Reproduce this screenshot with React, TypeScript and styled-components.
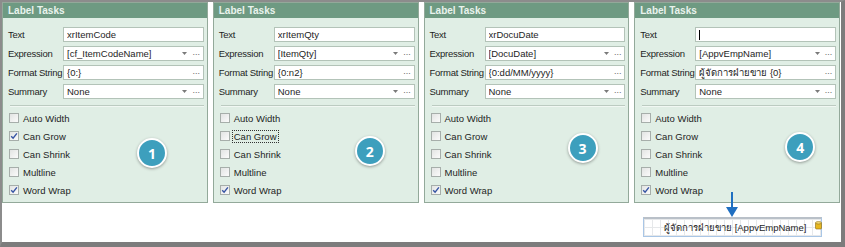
import React from 'react';
import styled, { createGlobalStyle } from 'styled-components';

/* global */
const GlobalStyle = createGlobalStyle`
  html, body {
    margin: 0;
    padding: 0;
    background: #ffffff;
  }
  body {
    font-family: "Liberation Sans", Arial, "Noto Sans", sans-serif;
  }
`;

interface Field {
  label: string;
  value: string;
  dropdown?: boolean;
  caret?: boolean;
}

interface Check {
  label: string;
  checked: boolean;
  focused?: boolean;
}

interface PanelData {
  id: number;
  fields: Field[];
  checks: Check[];
  badge: { x: number; y: number };
}

const checkLabels = ['Auto Width', 'Can Grow', 'Can Shrink', 'Multline', 'Word Wrap'];

const makeChecks = (grow: boolean, focusGrow = false): Check[] =>
  checkLabels.map((label) => ({
    label,
    checked: label === 'Word Wrap' || (label === 'Can Grow' && grow),
    focused: label === 'Can Grow' && focusGrow,
  }));

const panels: PanelData[] = [
  {
    id: 1,
    fields: [
      { label: 'Text', value: 'xrItemCode' },
      { label: 'Expression', value: '[cf_ItemCodeName]', dropdown: true },
      { label: 'Format String', value: '{0:}' },
      { label: 'Summary', value: 'None', dropdown: true },
    ],
    checks: makeChecks(true),
    badge: { x: 149, y: 150 },
  },
  {
    id: 2,
    fields: [
      { label: 'Text', value: 'xrItemQty' },
      { label: 'Expression', value: '[ItemQty]', dropdown: true },
      { label: 'Format String', value: '{0:n2}' },
      { label: 'Summary', value: 'None', dropdown: true },
    ],
    checks: makeChecks(false, true),
    badge: { x: 156, y: 148 },
  },
  {
    id: 3,
    fields: [
      { label: 'Text', value: 'xrDocuDate' },
      { label: 'Expression', value: '[DocuDate]', dropdown: true },
      { label: 'Format String', value: '{0:dd/MM/yyyy}' },
      { label: 'Summary', value: 'None', dropdown: true },
    ],
    checks: makeChecks(false),
    badge: { x: 158, y: 145 },
  },
  {
    id: 4,
    fields: [
      { label: 'Text', value: '', caret: true },
      { label: 'Expression', value: '[AppvEmpName]', dropdown: true },
      { label: 'Format String', value: 'ผู้จัดการฝ่ายขาย {0}' },
      { label: 'Summary', value: 'None', dropdown: true },
    ],
    checks: makeChecks(false),
    badge: { x: 165, y: 144 },
  },
];

/* ===========
App
=========== */
export default function App() {
  return (
    <>
      <GlobalStyle />
      <Frame>
        <PanelRow>
          {panels.map((p) => (
            <Panel key={p.id}>
              <PanelHeader>Label Tasks</PanelHeader>
              <PanelBody>
                {p.fields.map((f) => (
                  <FieldRow key={f.label}>
                    <FieldLabel>{f.label}</FieldLabel>
                    <InputBox>
                      <InputText>
                        {f.caret && <Caret />}
                        {f.value}
                      </InputText>
                      {f.label !== 'Text' && (
                        <InputButtons>
                          {f.dropdown && (
                            <svg width="5" height="3" viewBox="0 0 5 3">
                              <path d="M0 0h5L2.5 3z" fill="#7a7a7a" />
                            </svg>
                          )}
                          <Dots>···</Dots>
                        </InputButtons>
                      )}
                    </InputBox>
                  </FieldRow>
                ))}
                <Separator />
                {p.checks.map((c) => (
                  <CheckRow key={c.label}>
                    <CheckBox>
                      {c.checked && (
                        <svg width="8" height="8" viewBox="0 0 8 8">
                          <path
                            d="M1.2 4.2 L3.1 6.2 L6.9 1.4"
                            fill="none"
                            stroke="#3553a3"
                            strokeWidth="1.4"
                          />
                        </svg>
                      )}
                    </CheckBox>
                    <CheckLabel $focused={!!c.focused}>{c.label}</CheckLabel>
                  </CheckRow>
                ))}
              </PanelBody>
              <Badge $x={p.badge.x} $y={p.badge.y}>
                {p.id}
              </Badge>
            </Panel>
          ))}
        </PanelRow>
        <PreviewArea>
          <Arrow width="12" height="26" viewBox="0 0 12 26">
            <rect x="5" y="0" width="2" height="17" fill="#1f6fc1" />
            <path d="M0 15h12L6 25z" fill="#1f6fc1" />
          </Arrow>
          <ReportLabel>
            <ReportText>ผู้จัดการฝ่ายขาย [AppvEmpName]</ReportText>
            <DbIcon width="7" height="9" viewBox="0 0 7 9">
              <rect x="0.5" y="1.5" width="6" height="6.5" rx="1" fill="#e8b820" stroke="#8a6a10" strokeWidth="0.6" />
              <ellipse cx="3.5" cy="1.8" rx="3" ry="1.2" fill="#f7de7a" stroke="#8a6a10" strokeWidth="0.6" />
            </DbIcon>
          </ReportLabel>
        </PreviewArea>
      </Frame>
    </>
  );
}

/* style */
const Frame = styled.div`
  position: relative;
  width: 845px;
  height: 247px;
  box-sizing: border-box;
  background: #ffffff;
  border-top: 2px solid #8c8c8c;
  border-left: 2px solid #8c8c8c;
  border-right: 4px solid #7c7c7c;
  border-bottom: 5px solid #7c7c7c;
  display: flex;
  flex-direction: column;
`;

const PanelRow = styled.div`
  display: flex;
  gap: 5px;
  padding-right: 1px;
`;

const Panel = styled.div`
  position: relative;
  flex: 1;
  height: 201px;
  box-sizing: border-box;
  border: 1px solid #93a99a;
  background: #e0eee5;
  display: flex;
  flex-direction: column;
`;

const PanelHeader = styled.div`
  height: 15px;
  line-height: 15px;
  padding-left: 5px;
  background: #6e9a82;
  color: #e9f3ed;
  font-size: 10px;
  font-weight: bold;
`;

const PanelBody = styled.div`
  padding: 9px 3px 0 5px;
  display: flex;
  flex-direction: column;
`;

const FieldRow = styled.div`
  display: grid;
  grid-template-columns: 55px 1fr;
  align-items: center;
  height: 15px;
  margin-bottom: 4px;
`;

const FieldLabel = styled.div`
  font-size: 9.5px;
  letter-spacing: -0.25px;
  color: #1e1e1e;
  white-space: nowrap;
`;

const InputBox = styled.div`
  height: 15px;
  box-sizing: border-box;
  border: 1px solid #b3c3b8;
  background: #ffffff;
  display: flex;
  align-items: center;
  padding: 0 3px 0 3px;
`;

const InputText = styled.div`
  flex: 1;
  display: flex;
  align-items: center;
  font-size: 9.5px;
  color: #1e1e1e;
  white-space: nowrap;
  overflow: hidden;
`;

const Caret = styled.span`
  display: inline-block;
  width: 1px;
  height: 10px;
  background: #000;
`;

const InputButtons = styled.div`
  display: flex;
  align-items: center;
  gap: 5px;
`;

const Dots = styled.span`
  font-size: 9px;
  color: #6b6b6b;
  letter-spacing: -0.5px;
`;

const Separator = styled.div`
  height: 1px;
  background: #bccbc1;
  border-bottom: 1px solid #f1f8f3;
  margin: 2px 0 2px 2px;
`;

const CheckRow = styled.div`
  display: flex;
  align-items: center;
  height: 18px;
  padding-left: 1px;
`;

const CheckBox = styled.div`
  width: 10px;
  height: 10px;
  box-sizing: border-box;
  border: 1px solid #a6aeaa;
  background: linear-gradient(135deg, #e2e4e3, #fbfbfb);
  display: flex;
  align-items: center;
  justify-content: center;
  margin-right: 3px;
`;

const CheckLabel = styled.span<{ $focused: boolean }>`
  font-size: 9.5px;
  color: #1e1e1e;
  padding: 0 1px;
  outline: ${(p) => (p.$focused ? '1px dotted #333' : 'none')};
`;

const Badge = styled.div<{ $x: number; $y: number }>`
  position: absolute;
  left: ${(p) => p.$x - 15}px;
  top: ${(p) => p.$y - 15}px;
  width: 30px;
  height: 30px;
  box-sizing: border-box;
  border-radius: 50%;
  border: 2px solid #ffffff;
  background: #3d9fbd;
  box-shadow: 0 1px 3px rgba(0, 0, 0, 0.35);
  color: #ffffff;
  font-family: "Open Sans", "Liberation Sans", sans-serif;
  font-size: 14px;
  font-weight: bold;
  display: flex;
  align-items: center;
  justify-content: center;
`;

const PreviewArea = styled.div`
  flex: 1;
  display: flex;
  justify-content: flex-end;
  align-items: flex-start;
  padding: 14px 19px 0 0;
`;

const Arrow = styled.svg`
  position: absolute;
  left: 724px;
  top: 190px;
`;

const ReportLabel = styled.div`
  position: relative;
  width: 179px;
  height: 20px;
  box-sizing: border-box;
  border: 1px solid #a9c6e6;
  border-top: 2px solid #b9c0c8;
  background-color: #ffffff;
  background-image:
    repeating-linear-gradient(90deg, #e6e8ea 0 1px, transparent 1px 8px),
    repeating-linear-gradient(0deg, #e6e8ea 0 1px, transparent 1px 8px);
  display: flex;
  align-items: center;
  padding-left: 20px;
`;

const ReportText = styled.span`
  font-size: 9.5px;
  color: #1e1e1e;
  white-space: nowrap;
`;

const DbIcon = styled.svg`
  position: absolute;
  right: -1px;
  top: 2px;
`;
